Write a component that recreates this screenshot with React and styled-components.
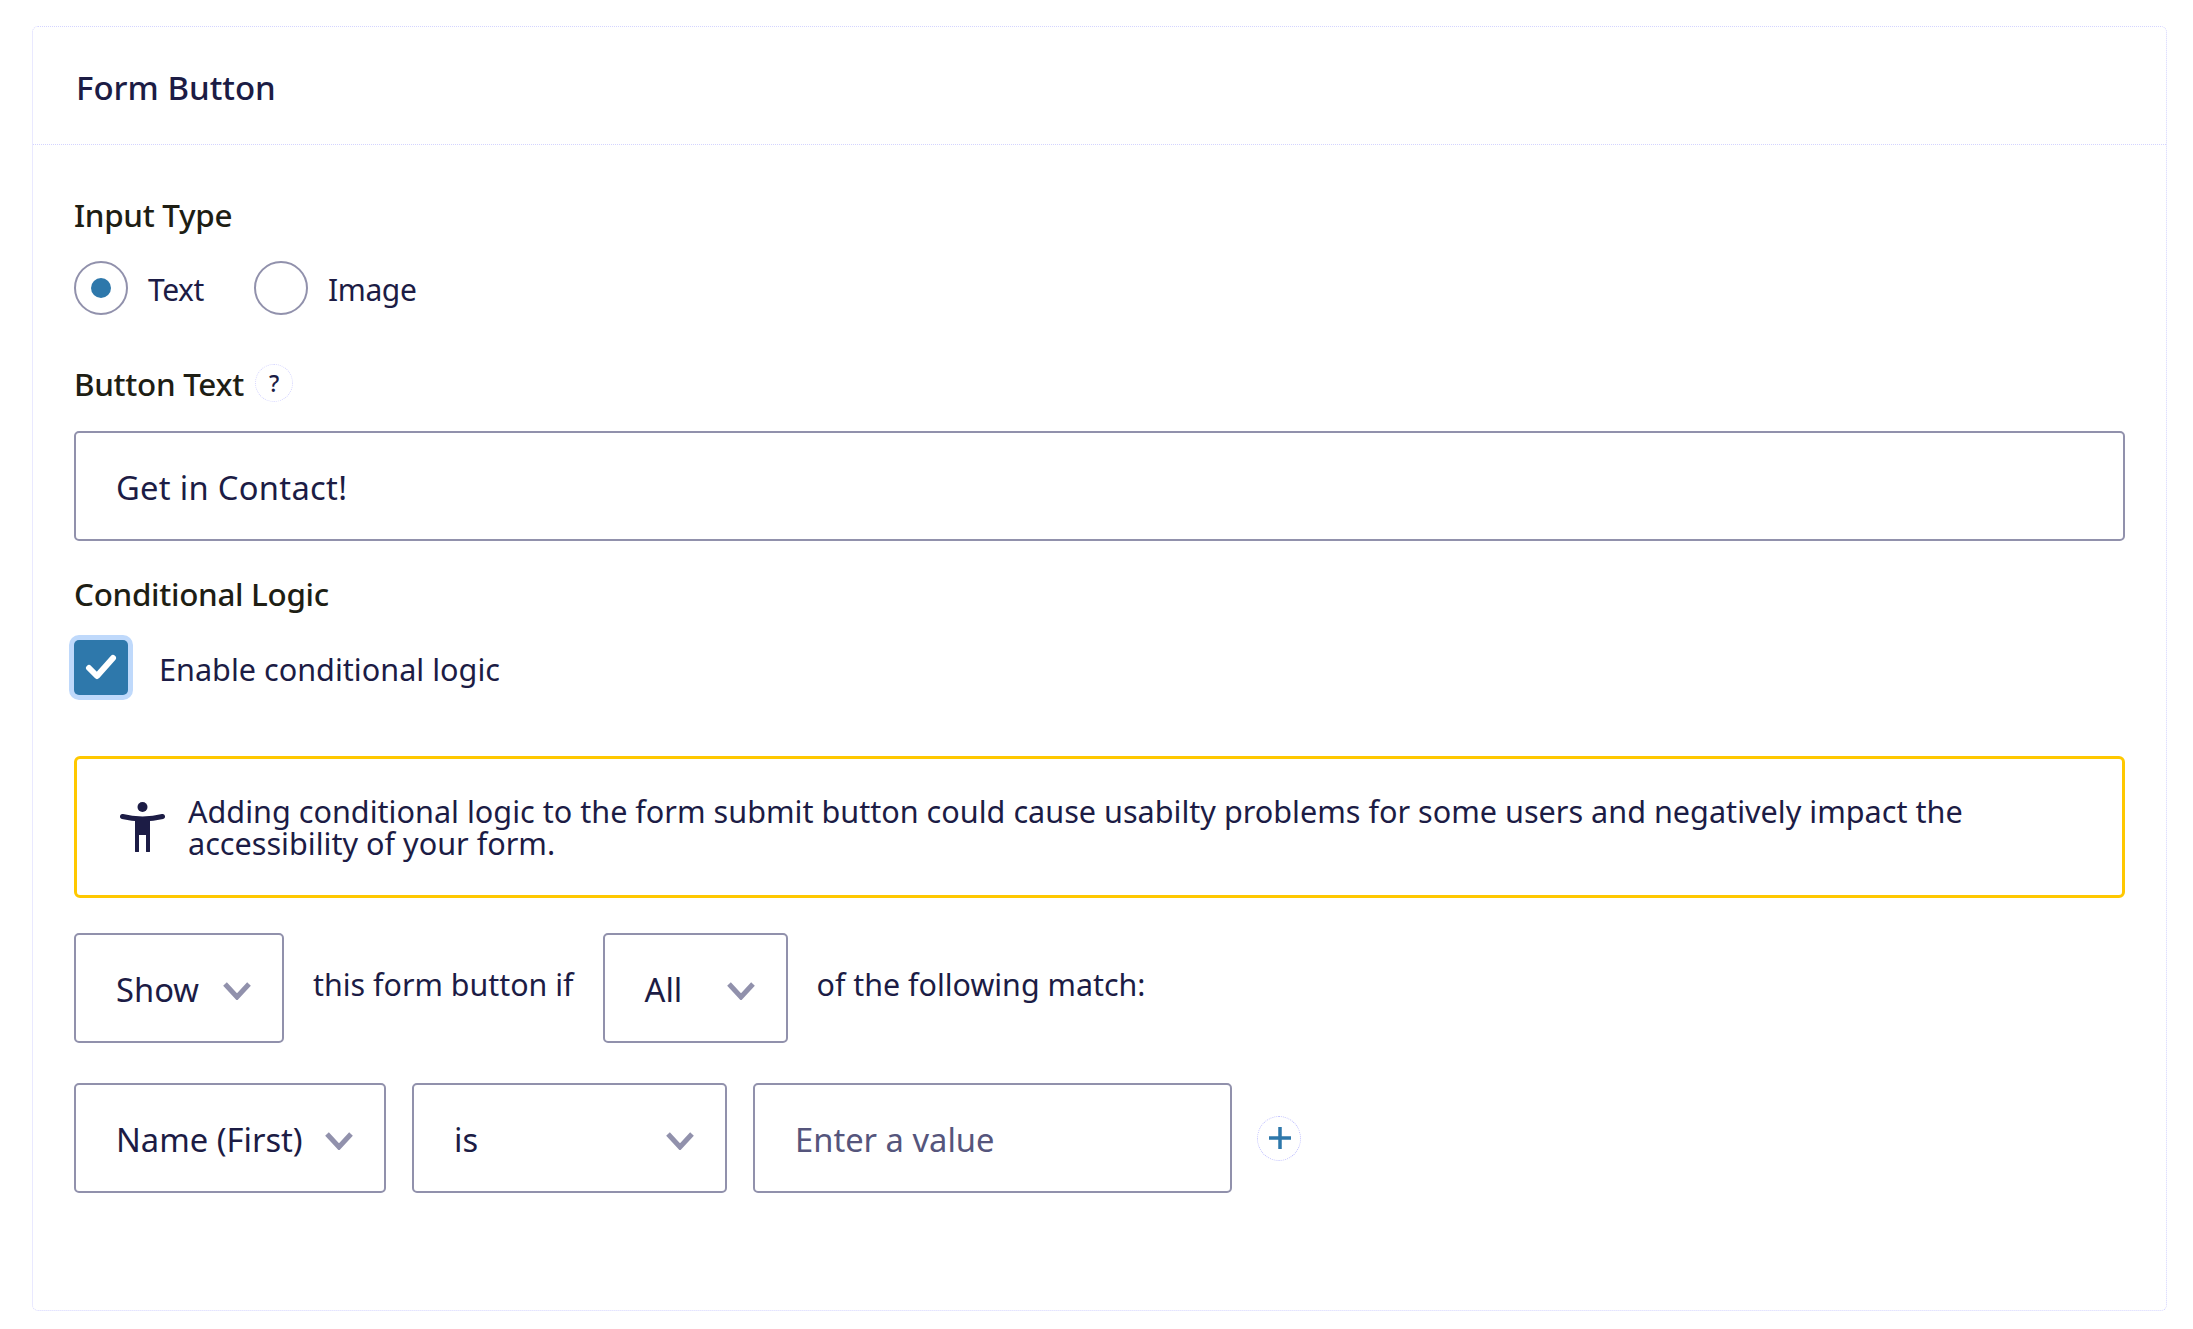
import React from 'react';
import styled, { createGlobalStyle } from 'styled-components';

const INK = '#1c1c45';
const LINE = '#9191ac';
const BLUE = '#2e78ab';
const DOTTED = '#d4d4ff';

const GlobalStyle = createGlobalStyle`
  html, body {
    background: #fff;
    margin: 0;
  }

  body {
    color: ${INK};
    font-family: "Noto Sans", "Open Sans", sans-serif;
    font-size: 30.6px;
  }
`;

const Page = styled.div`
  box-sizing: border-box;
  min-height: 1329px;
  padding: 26px 26px 18px 32px;
`;

const Card = styled.section`
  border: 1px dotted ${DOTTED};
  border-radius: 6px;
  box-sizing: border-box;
  height: 1285px;
`;

const CardHeader = styled.header`
  align-items: center;
  border-bottom: 1px dotted ${DOTTED};
  box-sizing: border-box;
  display: flex;
  height: 118px;
  padding: 3px 0 0 43px;
`;

const CardTitle = styled.h2`
  font-size: 33px;
  font-weight: 500;
  margin: 0;
`;

const Label = styled.div`
  align-items: center;
  color: #1e1e14;
  display: flex;
  font-size: 31.4px;
  font-weight: 500;
  gap: 11px;
  height: 46px;
  letter-spacing: -0.3px;
  margin-top: ${(p) => p.$top || 0}px;
`;

const CardBody = styled.div`
  display: flex;
  flex-direction: column;
  padding: 46px 41px 0 41px;
`;

const RadioRow = styled.div`
  align-items: center;
  display: flex;
  height: 54px;
  margin-top: 24px;
`;

const RadioCircle = styled.span`
  align-items: center;
  border: 2px solid ${LINE};
  border-radius: 50%;
  box-sizing: border-box;
  display: flex;
  flex: none;
  height: 54px;
  justify-content: center;
  width: 54px;

  &::after {
    background: ${BLUE};
    border-radius: 50%;
    content: '';
    display: ${(p) => (p.$checked ? 'block' : 'none')};
    height: 20px;
    width: 20px;
  }
`;

const RadioText = styled.span`
  font-size: 30px;
  letter-spacing: -0.4px;
  margin: 2px 50px 0 20px;
`;

const HelpDot = styled.span`
  align-items: center;
  border: 1px dotted ${DOTTED};
  border-radius: 50%;
  box-sizing: border-box;
  color: ${INK};
  display: flex;
  font-size: 23px;
  font-weight: 500;
  height: 38px;
  justify-content: center;
  width: 38px;
`;

const Field = styled.input`
  border: 2px solid ${LINE};
  border-radius: 5px;
  box-sizing: border-box;
  color: ${INK};
  font-family: inherit;
  font-size: 32.7px;
  height: 110px;
  letter-spacing: ${(p) => p.$tracking || 0}px;
  margin-top: ${(p) => p.$top || 0}px;
  outline: none;
  padding: 2px 40px 0;
  width: ${(p) => p.$width || '100%'};

  &::placeholder {
    color: #55557c;
    opacity: 1;
  }
`;

const CheckRow = styled.label`
  align-items: center;
  display: flex;
  height: 56px;
  margin-top: 23px;
`;

const CheckBox = styled.span`
  align-items: center;
  background: ${BLUE};
  border-radius: 5px;
  box-shadow: 0 0 0 5px #bfd9fb;
  display: flex;
  flex: none;
  height: 55px;
  justify-content: center;
  width: 54px;
`;

const CheckText = styled.span`
  margin: 3px 0 0 31px;
`;

const Notice = styled.div`
  align-items: center;
  border: 3px solid #ffc800;
  border-radius: 6px;
  box-sizing: border-box;
  display: flex;
  gap: 23px;
  height: 142px;
  margin-top: 61px;
  padding: 0 40px 0 43px;
`;

const NoticeText = styled.p`
  line-height: 32px;
  margin: 0;
`;

const MatchRow = styled.div`
  align-items: center;
  display: flex;
  gap: ${(p) => p.$gap}px;
  margin-top: ${(p) => p.$top}px;
`;

const Select = styled.div`
  align-items: center;
  border: 2px solid ${LINE};
  border-radius: 5px;
  box-sizing: border-box;
  display: flex;
  flex: none;
  font-size: 32.7px;
  height: 110px;
  justify-content: space-between;
  padding: 2px 31px 0 40px;
  width: ${(p) => p.$width}px;
`;

const Chevron = styled.svg`
  flex: none;
  height: 18px;
  margin-top: 4px;
  width: 28px;
`;

const MatchText = styled.span`
  font-size: 30.4px;
  margin-bottom: 8px;
`;

const AddButton = styled.button`
  align-items: center;
  background: none;
  border: 1.5px dotted #bfbfff;
  border-radius: 50%;
  box-sizing: border-box;
  display: flex;
  height: 45px;
  justify-content: center;
  margin-left: -1px;
  padding: 0 0 0 1px;
  width: 44px;
`;

const ChevronDown = () => (
  <Chevron viewBox="0 0 28 18" fill="none" stroke={LINE} strokeWidth="5">
    <path d="M2 2l12 13L26 2" />
  </Chevron>
);

const AccessIcon = () => (
  <svg width="45" height="50" viewBox="0 0 45 50" style={{ flex: 'none' }} fill={INK}>
    <circle cx="22.5" cy="5" r="5" />
    <path d="M2.5 14.5c6 1.6 12 2.4 20 2.4s14-.8 20-2.4" fill="none" stroke={INK} strokeWidth="5" strokeLinecap="round" />
    <path d="M15 16h15v33a2 2 0 0 1-4 0V33h-7v16a2 2 0 0 1-4 0z" />
  </svg>
);

const App = () => (
  <Page>
    <GlobalStyle />
    <Card>
      <CardHeader>
        <CardTitle>Form Button</CardTitle>
      </CardHeader>
      <CardBody>
        <Label>Input Type</Label>
        <RadioRow>
          <RadioCircle $checked />
          <RadioText>Text</RadioText>
          <RadioCircle />
          <RadioText>Image</RadioText>
        </RadioRow>
        <Label $top={45}>
          Button Text <HelpDot>?</HelpDot>
        </Label>
        <Field defaultValue="Get in Contact!" $top={25} $tracking={0.3} />
        <Label $top={29}>Conditional Logic</Label>
        <CheckRow>
          <CheckBox>
            <svg width="32" height="26" viewBox="0 0 32 26" fill="none" stroke="#fff" strokeWidth="6" strokeLinecap="round" strokeLinejoin="round">
              <path d="M4 14l8 8L28 4" />
            </svg>
          </CheckBox>
          <CheckText>Enable conditional logic</CheckText>
        </CheckRow>
        <Notice>
          <AccessIcon />
          <NoticeText>
            Adding conditional logic to the form submit button could cause usabilty problems for some users and negatively impact the accessibility of your form.
          </NoticeText>
        </Notice>
        <MatchRow $top={35} $gap={29}>
          <Select $width={210}>
            Show <ChevronDown />
          </Select>
          <MatchText>this form button if</MatchText>
          <Select $width={185}>
            All <ChevronDown />
          </Select>
          <MatchText>of the following match:</MatchText>
        </MatchRow>
        <MatchRow $top={40} $gap={26}>
          <Select $width={312}>
            Name (First) <ChevronDown />
          </Select>
          <Select $width={315}>
            is <ChevronDown />
          </Select>
          <Field placeholder="Enter a value" $width="479px" />
          <AddButton>
            <svg width="22" height="22" viewBox="0 0 22 22" stroke={BLUE} strokeWidth="3.5">
              <path d="M11 0v22M0 11h22" />
            </svg>
          </AddButton>
        </MatchRow>
      </CardBody>
    </Card>
  </Page>
);

export default App;
